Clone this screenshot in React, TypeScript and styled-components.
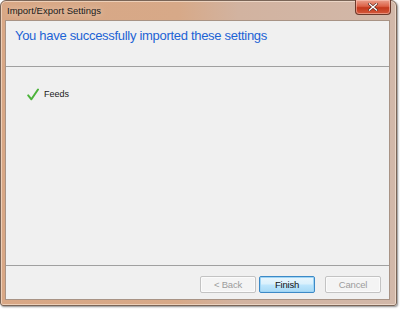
import React from "react";
import styled, { createGlobalStyle } from "styled-components";

const Global = createGlobalStyle`
  html, body { margin: 0; padding: 0; background: #ffffff; }
  body { font-family: "Liberation Sans", Arial, sans-serif; }
`;

const Page = styled.div`
  width: 400px;
  height: 309px;
  display: flex;
  align-items: flex-start;
  justify-content: flex-start;
`;

const Window = styled.div`
  box-sizing: border-box;
  width: 397px;
  height: 306px;
  border: 1px solid #7a6557;
  border-radius: 6px 6px 3px 3px;
  background: linear-gradient(90deg, #d8a785 0%, #d7a988 45%, #d2b3a0 60%, #d2b8a9 100%);
  box-shadow: 1px 1px 2px rgba(0, 0, 0, 0.45), inset 0 0 0 1px rgba(255, 240, 225, 0.55);
  padding: 0 6px 5px 4px;
  display: flex;
  flex-direction: column;
`;

const TitleBar = styled.div`
  height: 19px;
  display: flex;
  align-items: flex-start;
`;

const Title = styled.div`
  font-family: "Liberation Sans", Arial, sans-serif;
  font-size: 9.5px;
  color: #1a1a1a;
  padding: 4px 0 0 2px;
  line-height: 12px;
  text-shadow: 0 0 6px rgba(255, 235, 215, 0.9);
`;

const CloseButton = styled.div`
  margin-left: auto;
  margin-top: -1px;
  margin-right: -1px;
  width: 36px;
  height: 15px;
  box-sizing: border-box;
  border: 1px solid #6b3a2c;
  border-top: none;
  border-radius: 0 0 4px 4px;
  background: linear-gradient(180deg, #eba08c 0%, #dc6247 45%, #c4391c 55%, #d45a3d 100%);
  box-shadow: inset 0 0 0 1px rgba(255, 210, 195, 0.5);
  display: flex;
  align-items: center;
  justify-content: center;
`;

const Client = styled.div`
  flex: 1;
  box-sizing: border-box;
  background: #f0f0f0;
  border: 1px solid #a89385;
  display: flex;
  flex-direction: column;
`;

const Header = styled.div`
  height: 46px;
  box-sizing: border-box;
  padding: 6px 0 0 9px;
  border-bottom: 1px solid #a0a0a0;
`;

const Instruction = styled.div`
  font-family: "Liberation Sans", Arial, sans-serif;
  font-size: 13px;
  line-height: 18px;
  color: #1c63d5;
  letter-spacing: -0.3px;
`;

const Body = styled.div`
  flex: 1;
  padding: 20px 0 0 21px;
`;

const Item = styled.div`
  display: flex;
  align-items: center;
  gap: 5px;
  height: 14px;
`;

const ItemLabel = styled.span`
  font-family: "Liberation Sans", Arial, sans-serif;
  font-size: 9px;
  color: #1a1a1a;
`;

const Footer = styled.div`
  height: 34px;
  box-sizing: border-box;
  border-top: 1px solid #a0a0a0;
  display: flex;
  justify-content: flex-end;
  align-items: flex-start;
  padding: 10px 8px 0 0;
`;

const ButtonGroup = styled.div`
  display: flex;
  gap: 3px;
  margin-right: 10px;
`;

const Button = styled.div<{ $default?: boolean; $disabled?: boolean }>`
  width: 56px;
  height: 17px;
  box-sizing: border-box;
  border-radius: 2px;
  display: flex;
  align-items: center;
  justify-content: center;
  font-family: "Liberation Sans", Arial, sans-serif;
  font-size: 9.5px;
  letter-spacing: -0.2px;
  border: 1px solid ${(p) => (p.$default ? "#3c89c6" : "#c3c3c3")};
  color: ${(p) => (p.$disabled ? "#9c9c9c" : "#111111")};
  background: ${(p) =>
    p.$default
      ? "linear-gradient(180deg, #eaf6fd 0%, #d9f0fc 48%, #bee6fd 52%, #a7d9f5 100%)"
      : "#f4f4f4"};
  box-shadow: ${(p) => (p.$default ? "inset 0 0 0 1px #9fd5f5" : "inset 0 0 0 1px #fbfbfb")};
`;

const CheckIcon = () => (
  <svg width="12" height="13" viewBox="0 0 12 13">
    <path d="M1.2 7.4 L4.4 11.3 L11 1.5" fill="none" stroke="#4cb33a" strokeWidth="2" strokeLinecap="round" strokeLinejoin="round" />
  </svg>
);

const CloseGlyph = () => (
  <svg width="10" height="8" viewBox="0 0 10 8">
    <path d="M1.5 1 L8.5 7 M8.5 1 L1.5 7" stroke="#5a2a20" strokeWidth="2.6" strokeLinecap="square" />
    <path d="M1.5 1 L8.5 7 M8.5 1 L1.5 7" stroke="#ffffff" strokeWidth="1.4" strokeLinecap="square" />
  </svg>
);

export default function App() {
  return (
    <Page>
      <Global />
      <Window>
        <TitleBar>
          <Title>Import/Export Settings</Title>
          <CloseButton>
            <CloseGlyph />
          </CloseButton>
        </TitleBar>
        <Client>
          <Header>
            <Instruction>You have successfully imported these settings</Instruction>
          </Header>
          <Body>
            <Item>
              <CheckIcon />
              <ItemLabel>Feeds</ItemLabel>
            </Item>
          </Body>
          <Footer>
            <ButtonGroup>
              <Button $disabled>&lt; Back</Button>
              <Button $default>Finish</Button>
            </ButtonGroup>
            <Button $disabled>Cancel</Button>
          </Footer>
        </Client>
      </Window>
    </Page>
  );
}
